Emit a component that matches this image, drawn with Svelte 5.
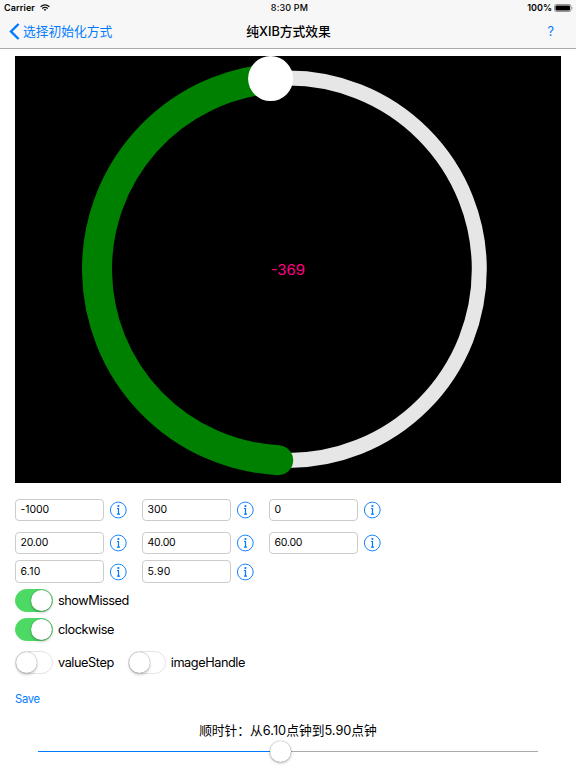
<script>
  const rows = [['-1000', '300', '0'], ['20.00', '40.00', '60.00'], ['6.10', '5.90']];
  const switches = [
    [{ label: 'showMissed', on: true }],
    [{ label: 'clockwise', on: true }],
    [{ label: 'valueStep', on: false }, { label: 'imageHandle', on: false }]
  ];
  const progress = 48.6;
</script>

<div class="screen">
  <header>
    <div class="status">
      <div class="carrier">
        <span>Carrier</span>
        <svg width="10" height="8" viewBox="0 0 10 8" fill="none" stroke="#111">
          <path d="M.6 2.7Q5-1 9.4 2.7M2.2 4.5Q5 2.2 7.8 4.5" stroke-width="1.3" />
          <path d="M3.6 5.5Q5 4.5 6.4 5.5L5 7.1Z" fill="#111" stroke="none" />
        </svg>
      </div>
      <div class="time">8:30 PM</div>
      <div class="battery">
        <span>100%</span>
        <svg width="19" height="8" viewBox="0 0 19 8">
          <rect x=".5" y=".5" width="16.5" height="7" rx="2" fill="none" stroke="#777" stroke-width=".8" />
          <rect x="1.5" y="1.5" width="14.5" height="5" rx="1" fill="#000" />
          <path d="M17.8 2.5Q19 4 17.8 5.5Z" fill="#555" />
        </svg>
      </div>
    </div>
    <nav>
      <a class="back" href="#back">
        <svg width="11" height="17" viewBox="0 0 11 17"><path d="M9.6 1L2 8.5L9.6 16" fill="none" stroke="#007aff" stroke-width="2.4" /></svg>
        <span>选择初始化方式</span>
      </a>
      <h1>纯XIB方式效果</h1>
      <a class="help" href="#help">?</a>
    </nav>
  </header>

  <main>
    <svg class="dial" width="546" height="427" viewBox="0 0 546 427">
      <rect width="546" height="427" fill="#000" />
      <g fill="none" stroke-linecap="round">
        <circle cx="273.1" cy="213.3" r="191.2" stroke="#e6e6e6" stroke-width="15" />
        <path d="M263.2 404.2A191.3 191.3 0 0 1 255.5 22.7" stroke="#008000" stroke-width="30" />
      </g>
      <circle cx="255.6" cy="22.6" r="22.5" fill="#fff" />
      <text x="272.9" y="218.8" text-anchor="middle" textLength="34.5">-369</text>
    </svg>

    <div class="fields">
      {#each rows as row}
        <div class="row">
          {#each row as value}
            <div class="field">
              <div class="input">{value}</div>
              <svg width="18" height="18" viewBox="0 0 18 18">
                <circle cx="9.3" cy="9" r="7.9" fill="none" stroke="#1784ff" stroke-width="1" />
                <circle cx="9.4" cy="5" r="1.1" fill="#007aff" />
                <path d="M8 7.5H9.5V13M8 13.1H11" fill="none" stroke="#007aff" stroke-width="1.2" />
              </svg>
            </div>
          {/each}
        </div>
      {/each}
    </div>

    <div class="switches">
      {#each switches as group}
        <div class="group">
          {#each group as item}
            <div class="option">
              <div class="switch" class:on={item.on}><i></i></div>
              <span>{item.label}</span>
            </div>
          {/each}
        </div>
      {/each}
    </div>

    <div class="save">Save</div>
    <div class="caption">顺时针：从6.10点钟到5.90点钟</div>
    <div class="slider">
      <div class="fill" style="width: {progress}%"></div>
      <div class="thumb"></div>
      <div class="rest"></div>
    </div>
  </main>
</div>

<style>
  :global(body) { background: #fff; }
  .screen {
    width: 576px;
    height: 768px;
    overflow: hidden;
    background: #fff;
    color: #000;
    font-family: Inter, "Noto Sans CJK SC", sans-serif;
    font-size: 12.75px;
  }
  header {
    box-sizing: border-box;
    height: 49px;
    background: #f7f7f7;
    border-bottom: 1px solid #aaa;
  }
  .status, nav { display: grid; grid-template-columns: 1fr auto 1fr; align-items: center; }
  .status { height: 15px; padding: 1px 3px 0 4px; box-sizing: border-box; font-size: 9px; font-weight: 600; line-height: 14px; }
  .carrier, .battery, .back, .row, .field, .group, .option, .slider { display: flex; align-items: center; }
  .carrier { gap: 5px; letter-spacing: .08px; }
  .time { font-weight: 500; letter-spacing: .15px; padding-left: 2px; }
  .battery { justify-content: flex-end; gap: 2px; }
  nav { height: 33px; padding: 0 22px 0 9px; }
  a { color: #007aff; text-decoration: none; }
  .back { gap: 3px; }
  .back span { margin-top: -2px; }
  h1 { margin: -2px 0 0 14px; font-size: 12.75px; font-weight: 500; }
  .help { justify-self: end; }
  main { padding: 7px 15px 0; }
  .dial { display: block; }
  .dial text { font-size: 15px; fill: #ff0080; }
  .fields { padding-top: 16px; }
  .row { height: 22px; gap: 15px; margin-bottom: 11px; }
  .row:nth-child(2) { margin-bottom: 6px; }
  .row:last-child { margin-bottom: 0; height: 23px; }
  .field { width: 112px; gap: 5px; height: 100%; }
  .input {
    box-sizing: border-box;
    width: 89px;
    height: 100%;
    border: 1px solid #ccc;
    border-radius: 4px;
    padding-left: 4.5px;
    line-height: 19px;
    font-size: 10.5px;
    letter-spacing: -.1px;
  }
  .row:nth-child(2) .input { letter-spacing: -.25px; }
  .row:last-child .input { line-height: 21px; letter-spacing: .2px; }
  .switches { padding-top: 6px; }
  .group { height: 23px; gap: 14px; margin-bottom: 6px; }
  .group:nth-child(2) { margin-bottom: 10px; }
  .group:last-child { margin: 0; }
  .option { gap: 5px; letter-spacing: -.45px; }
  .option span { white-space: nowrap; }
  .switch {
    box-sizing: border-box;
    width: 38px;
    height: 23px;
    border-radius: 12px;
    border: 1px solid #e3e3e3;
    display: flex;
    align-items: center;
  }
  .switch i { width: 21px; height: 21px; flex: none; border-radius: 50%; background: #fff; box-shadow: 0 2px 3px #0003, 0 0 1px #0008; }
  .on { background: #4cd964; border-color: #4cd964; justify-content: flex-end; }
  .save { margin-top: 18px; height: 15px; line-height: 15px; font-size: 11.25px; letter-spacing: -.3px; color: #007aff; }
  .caption { margin-top: 15px; height: 18px; line-height: 18px; text-align: center; }
  .slider { height: 22px; margin: 0 23px; }
  .fill { height: 1px; background: #007aff; margin-right: -11px; flex: none; }
  .thumb { width: 21px; height: 21px; border-radius: 50%; background: #fff; z-index: 1; box-shadow: 0 1px 3px #0005, 0 0 1px #0006; flex: none; }
  .rest { height: 1px; background: #aaa; flex: 1; }
</style>
